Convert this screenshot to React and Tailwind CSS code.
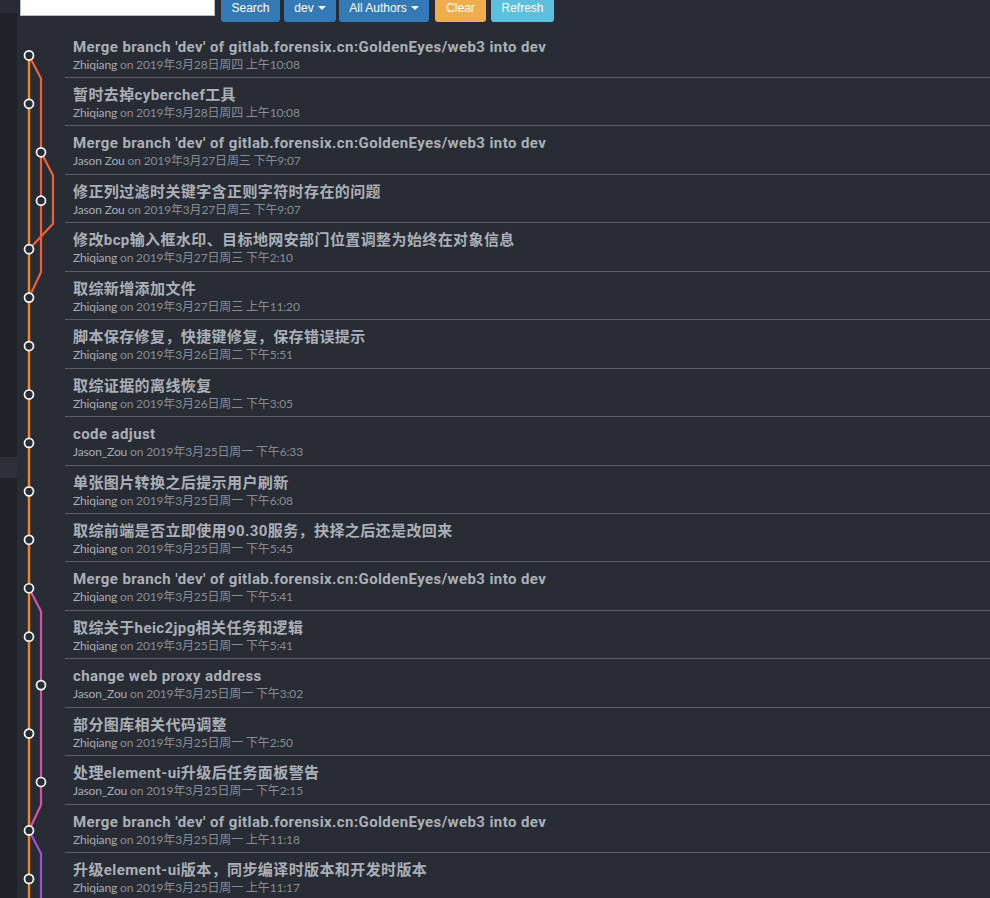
import React from "react";

const commits = [
  { title: "Merge branch 'dev' of gitlab.forensix.cn:GoldenEyes/web3 into dev", author: "Zhiqiang", date: "2019年3月28日周四 上午10:08", lane: 0 },
  { title: "暂时去掉cyberchef工具", author: "Zhiqiang", date: "2019年3月28日周四 上午10:08", lane: 0 },
  { title: "Merge branch 'dev' of gitlab.forensix.cn:GoldenEyes/web3 into dev", author: "Jason Zou", date: "2019年3月27日周三 下午9:07", lane: 1 },
  { title: "修正列过滤时关键字含正则字符时存在的问题", author: "Jason Zou", date: "2019年3月27日周三 下午9:07", lane: 1 },
  { title: "修改bcp输入框水印、目标地网安部门位置调整为始终在对象信息", author: "Zhiqiang", date: "2019年3月27日周三 下午2:10", lane: 0 },
  { title: "取综新增添加文件", author: "Zhiqiang", date: "2019年3月27日周三 上午11:20", lane: 0 },
  { title: "脚本保存修复，快捷键修复，保存错误提示", author: "Zhiqiang", date: "2019年3月26日周二 下午5:51", lane: 0 },
  { title: "取综证据的离线恢复", author: "Zhiqiang", date: "2019年3月26日周二 下午3:05", lane: 0 },
  { title: "code adjust", author: "Jason_Zou", date: "2019年3月25日周一 下午6:33", lane: 0 },
  { title: "单张图片转换之后提示用户刷新", author: "Zhiqiang", date: "2019年3月25日周一 下午6:08", lane: 0 },
  { title: "取综前端是否立即使用90.30服务，抉择之后还是改回来", author: "Zhiqiang", date: "2019年3月25日周一 下午5:45", lane: 0 },
  { title: "Merge branch 'dev' of gitlab.forensix.cn:GoldenEyes/web3 into dev", author: "Zhiqiang", date: "2019年3月25日周一 下午5:41", lane: 0 },
  { title: "取综关于heic2jpg相关任务和逻辑", author: "Zhiqiang", date: "2019年3月25日周一 下午5:41", lane: 0 },
  { title: "change web proxy address", author: "Jason_Zou", date: "2019年3月25日周一 下午3:02", lane: 1 },
  { title: "部分图库相关代码调整", author: "Zhiqiang", date: "2019年3月25日周一 下午2:50", lane: 0 },
  { title: "处理element-ui升级后任务面板警告", author: "Jason_Zou", date: "2019年3月25日周一 下午2:15", lane: 1 },
  { title: "Merge branch 'dev' of gitlab.forensix.cn:GoldenEyes/web3 into dev", author: "Zhiqiang", date: "2019年3月25日周一 上午11:18", lane: 0 },
  { title: "升级element-ui版本，同步编译时版本和开发时版本", author: "Zhiqiang", date: "2019年3月25日周一 上午11:17", lane: 0 },
];

const ROW = 48.44;
const dotY = (i) => 25.4 + ROW * i;
const bottomY = (i) => ROW * (i + 1);
const laneX = [12, 24, 36];

const pts = (arr) => arr.map(([x, y]) => `${x},${y}`).join(" ");

function Graph() {
  const h = ROW * commits.length;
  return (
    <svg width="48" height={h} className="block">
      {/* master line */}
      <line x1={laneX[0]} y1={dotY(0)} x2={laneX[0]} y2={h} stroke="#f7861c" strokeWidth="2.4" />
      {/* red branch */}
      <polyline
        fill="none"
        stroke="#f2603a"
        strokeWidth="2.2"
        points={pts([[laneX[0], dotY(0)], [laneX[1], bottomY(0)], [laneX[1], bottomY(4)], [laneX[0], dotY(5)]])}
      />
      <polyline
        fill="none"
        stroke="#f2603a"
        strokeWidth="2.2"
        points={pts([[laneX[1], dotY(2)], [laneX[2], bottomY(2)], [laneX[2], bottomY(3)], [laneX[0], dotY(4)]])}
      />
      {/* pink branch */}
      <polyline
        fill="none"
        stroke="#d652a8"
        strokeWidth="2.2"
        points={pts([[laneX[0], dotY(11)], [laneX[1], bottomY(11)], [laneX[1], bottomY(15)], [laneX[0], dotY(16)]])}
      />
      {/* purple branch */}
      <polyline
        fill="none"
        stroke="#a24fd8"
        strokeWidth="2.2"
        points={pts([[laneX[0], dotY(16)], [laneX[1], bottomY(16)], [laneX[1], h]])}
      />
      {commits.map((c, i) => (
        <circle key={i} cx={laneX[c.lane]} cy={dotY(i)} r="4.5" fill="#282c34" stroke="#ffffff" strokeWidth="1.7" />
      ))}
    </svg>
  );
}

function Caret() {
  return <span className="inline-block ml-[4px] align-middle w-0 h-0 border-x-[4px] border-x-transparent border-t-[4px] border-t-white" />;
}

function Btn({ children, className }) {
  return (
    <button className={`h-[30px] pt-[2px] px-[10px] rounded-[3px] text-[12px] text-white leading-none flex items-center ${className}`}>
      {children}
    </button>
  );
}

export default function App() {
  return (
    <div className="flex h-[898px] w-[990px] overflow-hidden bg-[#282c34] font-['Lato','Noto_Sans_CJK_SC',sans-serif]">
      <div className="w-[17px] shrink-0 flex flex-col bg-[#1f2228]">
        <div className="h-[13px] bg-[#272b33]" />
        <div className="h-[444px]" />
        <div className="h-[21px] bg-[#2c3038]" />
      </div>
      <div className="flex-1 flex flex-col">
        <div className="flex items-start -mt-[8px] font-['Liberation_Sans',Arial,sans-serif]">
          <input className="ml-[3px] w-[195px] h-[24px] bg-white border border-[#bbb] outline-none" />
          <Btn className="ml-[6px] w-[59px] justify-center bg-[#337ab7]">Search</Btn>
          <Btn className="ml-[4px] w-[52px] justify-center bg-[#337ab7]">dev<Caret /></Btn>
          <Btn className="ml-[3px] w-[90px] justify-center bg-[#337ab7]">All Authors<Caret /></Btn>
          <Btn className="ml-[6px] w-[51px] justify-center bg-[#f0ad4e]">Clear</Btn>
          <Btn className="ml-[5px] w-[63px] justify-center bg-[#5bc0de]">Refresh</Btn>
        </div>
        <div className="flex pt-[7.6px]">
          <div className="w-[48px] shrink-0">
            <Graph />
          </div>
          <div className="flex-1">
            {commits.map((c, i) => (
              <div key={i} className="h-[48.44px] border-b border-[#5a5e66] pl-[8px] pt-[8px]">
                <div className="text-[15px] font-bold leading-[19px] tracking-[0.4px] text-[#abb0b8] whitespace-nowrap font-['Roboto','Noto_Sans_CJK_SC',sans-serif]">
                  {c.title}
                </div>
                <div className="text-[12px] leading-[16px] whitespace-nowrap tracking-[-0.15px]">
                  <span className="text-[#a9adb4]">{c.author}</span>
                  <span className="text-[#878c95]"> on {c.date}</span>
                </div>
              </div>
            ))}
          </div>
        </div>
      </div>
    </div>
  );
}
